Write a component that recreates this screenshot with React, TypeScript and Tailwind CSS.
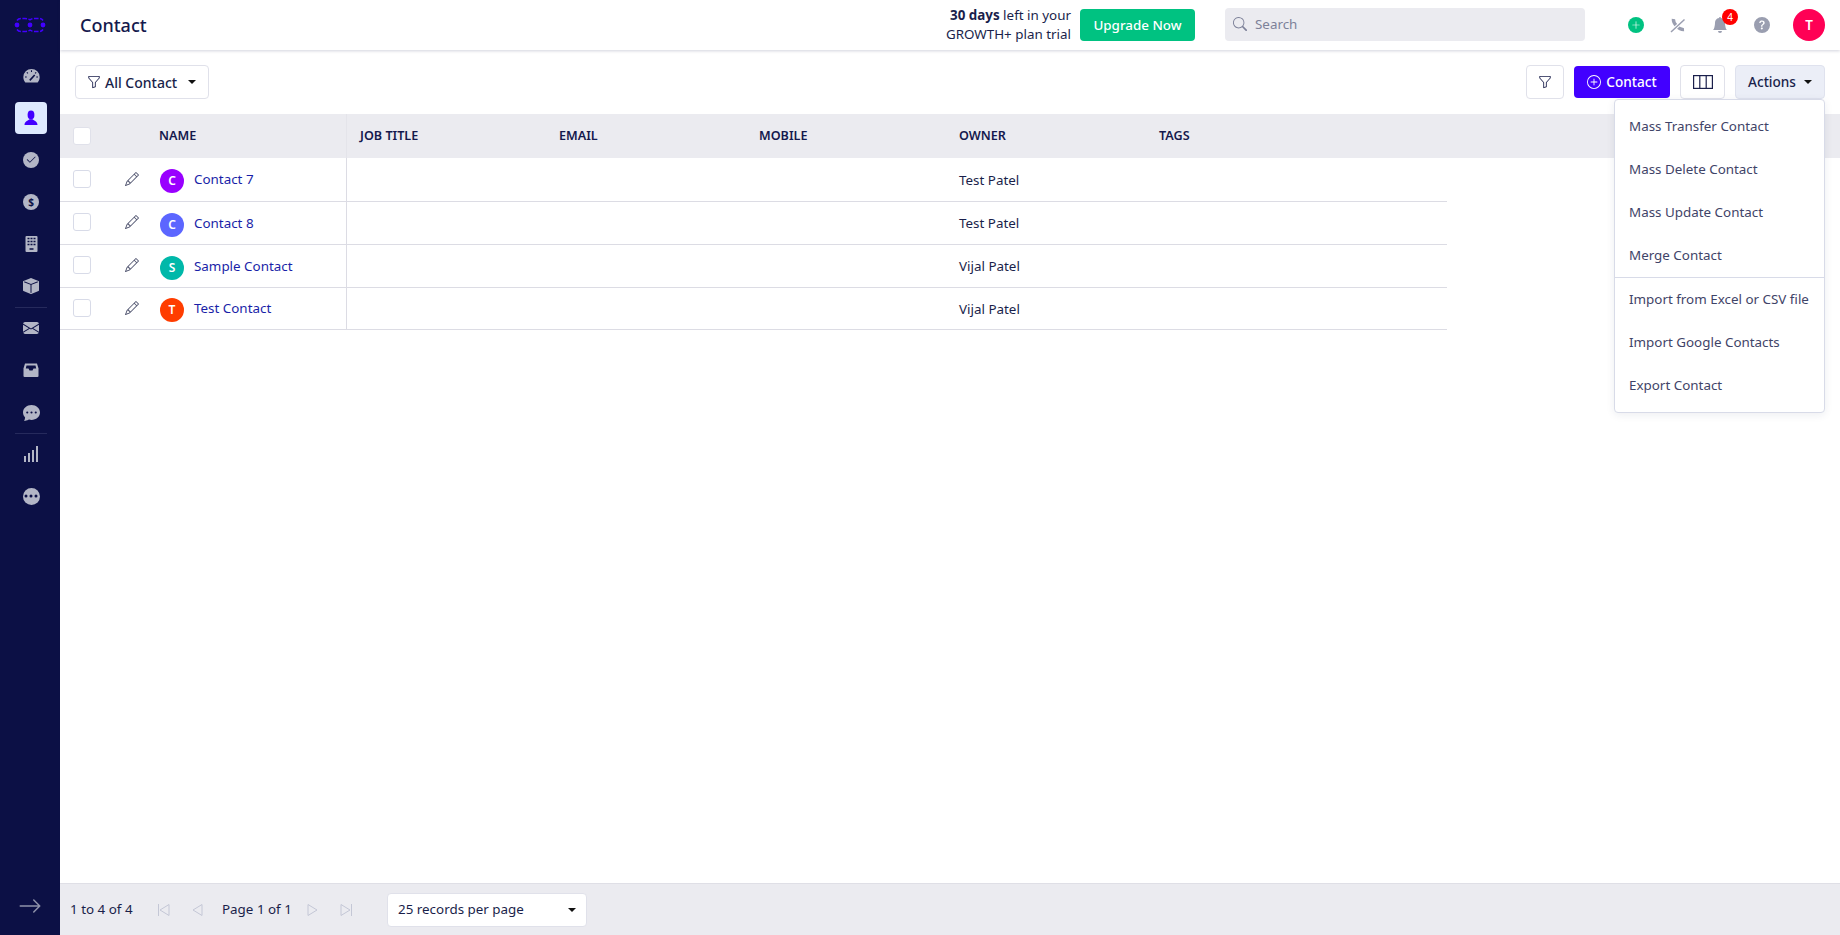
import React from 'react';
import {
  BsCheck2, BsBoxFill, BsEnvelopeFill, BsChatDotsFill, BsBellFill, BsQuestionCircleFill, BsSearch,
  BsFunnel, BsPencil, BsPlusCircle, BsArrowRight, BsPlusLg, BsThreeDots,
} from 'react-icons/bs';

const rows = [
  { name: 'Contact 7', letter: 'C', color: 'bg-[#9900ff]', owner: 'Test Patel', height: 'h-[44px]' },
  { name: 'Contact 8', letter: 'C', color: 'bg-[#5c66ff]', owner: 'Test Patel', height: 'h-[43px]' },
  { name: 'Sample Contact', letter: 'S', color: 'bg-[#00b8a9]', owner: 'Vijal Patel', height: 'h-[43px]' },
  { name: 'Test Contact', letter: 'T', color: 'bg-[#ff3d00]', owner: 'Vijal Patel', height: 'h-[42px]' },
];

const menuTop = ['Mass Transfer Contact', 'Mass Delete Contact', 'Mass Update Contact', 'Merge Contact'];
const menuBottom = ['Import from Excel or CSV file', 'Import Google Contacts', 'Export Contact'];
const columns = ['JOB TITLE', 'EMAIL', 'MOBILE', 'OWNER', 'TAGS'];

const GRAY = '#b3b6c6';
const NAVY = '#0c1045';

function Logo() {
  return (
    <svg width="32" height="16" viewBox="0 0 32 16" fill="none">
      <circle cx="3" cy="8" r="2.4" fill="#4200ff" />
      <circle cx="16" cy="8" r="2.4" fill="#4200ff" />
      <circle cx="29" cy="8" r="2.4" fill="#4200ff" />
      <path d="M3 3.500C4 2 5.500 1.500 7 1.500H11C13 1.500 14.500 2 16 2.800C17.500 2 19 1.500 21 1.500H25C26.500 1.500 28 2 29 3.500" stroke="#4200ff" strokeWidth="1.500" strokeDasharray="4.500 1.500" />
      <path d="M3 12.500C4 14 5.500 14.500 7 14.500H11C13 14.500 14.500 14 16 13.200C17.500 14 19 14.500 21 14.500H25C26.500 14.500 28 14 29 12.500" stroke="#4200ff" strokeWidth="1.500" strokeDasharray="4.500 1.500" />
    </svg>
  );
}

function Gauge() {
  return (
    <svg width="17" height="16" viewBox="0 0 16 15">
      <path d="M8 .8A7.700 7.700 0 0 0 .3 8.500c0 2 .7 3.800 1.900 5.200h11.600c1.200-1.400 1.900-3.200 1.900-5.200A7.700 7.700 0 0 0 8 .8Z" fill={GRAY} />
      <path d="M8 2.200v1.600M3.600 4l1 1.100M12.400 4l-1 1.100M1.900 8.500h1.600M12.500 8.500h1.600" stroke={NAVY} strokeWidth="1" />
      <path d="M6.400 11.600 11 6.600" stroke={NAVY} strokeWidth="1.500" />
    </svg>
  );
}

function Person() {
  return (
    <svg width="16" height="16" viewBox="0 0 16 16" fill="#4200ff">
      <ellipse cx="8" cy="5" rx="3.400" ry="4.400" />
      <path d="M1.500 15C1.500 11 5 10.800 6.500 9.200h3c1.500 1.600 5 1.800 5 5.800Z" />
    </svg>
  );
}

function Building() {
  return (
    <svg width="13" height="16" viewBox="0 0 13 16">
      <rect x="0.5" y="0" width="12" height="16" rx="1" fill={GRAY} />
      <path d="M2.500 2.500h2M5.500 2.500h2M8.500 2.500h2M2.500 5.500h2M5.500 5.500h2M8.500 5.500h2M2.500 8.500h2M5.500 8.500h2M8.500 8.500h2M4.500 13h4" stroke={NAVY} strokeWidth="1.600" />
    </svg>
  );
}

function Inbox() {
  return (
    <svg width="16" height="14" viewBox="0 0 16 14">
      <path d="M2 .5h12l1.500 5V13a1 1 0 0 1-1 1h-13a1 1 0 0 1-1-1V5.500Z" fill={GRAY} />
      <path d="M3.500 2.500h9l.7 3H10.500L9.500 7.500h-3l-1-2H2.800Z" fill={NAVY} />
    </svg>
  );
}

function Bars() {
  return (
    <svg width="14" height="16" viewBox="0 0 14 16" fill={GRAY}>
      <rect x="0" y="10" width="2" height="6" />
      <rect x="4" y="7" width="2" height="9" />
      <rect x="8" y="4" width="2" height="12" />
      <rect x="12" y="0" width="2" height="16" />
    </svg>
  );
}

function Caret() {
  return <span className="inline-block w-0 h-0 border-x-[4px] border-x-transparent border-t-[4px] border-t-[#111]" />;
}

function CircleIcon({ children }: { children: React.ReactNode }) {
  return <span className="w-4 h-4 rounded-full bg-[#b3b6c6] flex items-center justify-center text-[#0c1045]">{children}</span>;
}

function NavItem({ active, children }: { active?: boolean; children: React.ReactNode }) {
  return (
    <div className={`h-8 w-8 mt-[10px] rounded flex items-center justify-center ${active ? 'bg-[#deeaff]' : ''}`}>
      {children}
    </div>
  );
}

function NavDivider() {
  return <div className="w-8 h-px bg-[#262a5c] mt-[5px] -mb-[6px]" />;
}

function ColumnsIcon() {
  return (
    <svg width="20" height="14" viewBox="0 0 20 14" fill="none" stroke="#1a1f4b" strokeWidth="1.200">
      <rect x="0.6" y="0.6" width="18.800" height="12.800" />
      <path d="M6.800 0.6V13.400M13.200 0.6V13.400" />
    </svg>
  );
}

function PhoneSlash() {
  return (
    <svg width="16" height="16" viewBox="0 0 16 16" fill="none">
      <path d="M3.400 2C3 6.500 9 13 14 12.600" stroke="#9a9eb0" strokeWidth="3.400" />
      <path d="M0.500 15.500 15 2" stroke="#fff" strokeWidth="3.500" />
      <path d="M1 15 14.500 2.500" stroke="#9a9eb0" strokeWidth="1.500" />
    </svg>
  );
}

function SkipIcon({ dir }: { dir: 'first' | 'prev' | 'next' | 'last' }) {
  const path = {
    first: 'M1.500 1V13M12 1.500V12.500L3 7Z',
    prev: 'M12 1.500V12.500L3 7Z',
    next: 'M2 1.500V12.500L11 7Z',
    last: 'M12.500 1V13M2 1.500V12.500L11 7Z',
  }[dir];
  return (
    <svg width="14" height="14" viewBox="0 0 14 14" fill="none" stroke="#c4c7d6" strokeWidth="1">
      <path d={path} />
    </svg>
  );
}

export default function App() {
  return (
    <div className="h-[935px] w-[1840px] flex overflow-hidden bg-white text-[#1a1f4b] text-[13.4px] font-['Noto_Sans',sans-serif]">
      {/* Sidebar */}
      <aside className="w-[60px] shrink-0 bg-[#0c1045] flex flex-col items-center">
        <div className="h-[50px] w-full flex items-center justify-center"><Logo /></div>
        <div className="w-8 ml-[2px] flex flex-col items-center">
          <NavItem><Gauge /></NavItem>
          <NavItem active><Person /></NavItem>
          <NavItem><CircleIcon><BsCheck2 className="w-3 h-3" /></CircleIcon></NavItem>
          <NavItem><CircleIcon><span className="text-[10px] font-bold leading-none">$</span></CircleIcon></NavItem>
          <NavItem><Building /></NavItem>
          <NavItem><BsBoxFill className="w-4 h-4 text-[#b3b6c6]" /></NavItem>
          <NavDivider />
          <NavItem><BsEnvelopeFill className="w-4 h-4 text-[#b3b6c6]" /></NavItem>
          <NavItem><Inbox /></NavItem>
          <NavItem><BsChatDotsFill className="w-[17px] h-[17px] text-[#b3b6c6]" /></NavItem>
          <NavDivider />
          <NavItem><Bars /></NavItem>
          <NavItem>
            <span className="w-[17px] h-[17px] rounded-full bg-[#b3b6c6] flex items-center justify-center text-[#0c1045]"><BsThreeDots className="w-4 h-4" /></span>
          </NavItem>
        </div>
        <div className="mt-auto h-[52px] flex items-center justify-center pb-[6px]"><BsArrowRight className="w-6 h-6 text-[#8f92aa]" /></div>
      </aside>

      <div className="flex-1 min-w-0 flex flex-col">
        {/* Header */}
        <header className="h-[50px] shrink-0 flex items-center shadow-[0_1px_3px_rgba(30,35,80,0.2)] relative z-10 bg-white pl-5 pr-[15px]">
          <h1 className="text-[18px] font-medium text-[#14194d]">Contact</h1>
          <div className="ml-auto text-right leading-[19px]">
            <div><b className="font-bold">30 days</b> left in your</div>
            <div>GROWTH+ plan trial</div>
          </div>
          <button className="ml-[9px] w-[115px] h-8 rounded bg-[#00c281] text-white font-medium">Upgrade Now</button>
          <div className="ml-[30px] w-[360px] h-[33px] rounded bg-[#ebebf0] flex items-center px-2 gap-2 -mt-[2px] text-[#7d8199]">
            <BsSearch className="w-[14px] h-[14px]" />
            <span>Search</span>
          </div>
          <div className="ml-[43px] w-4 h-4 rounded-full bg-[#00c281] flex items-center justify-center"><BsPlusLg className="w-[10px] h-[10px] text-white" /></div>
          <div className="ml-[26px] flex"><PhoneSlash /></div>
          <div className="ml-[26px] relative">
            <BsBellFill className="w-4 h-4 text-[#9a9eb0]" />
            <span className="absolute -top-[8px] left-[10px] w-4 h-4 rounded-full bg-[#f00] text-white text-[10px] leading-4 text-center">4</span>
          </div>
          <BsQuestionCircleFill className="ml-[26px] w-4 h-4 text-[#9a9eb0]" />
          <div className="ml-[23px] w-8 h-8 rounded-full bg-[#ff0055] text-white font-semibold flex items-center justify-center">T</div>
        </header>

        {/* Toolbar */}
        <div className="h-[64px] shrink-0 flex items-center pl-[15px] pr-[15px] relative">
          <button className="h-[34px] w-[134px] border border-[#e0e1ea] rounded flex items-center pl-[11px] gap-1 text-[14px] font-medium text-[#1a1f4b]">
            <BsFunnel className="w-[14px] h-[14px]" />
            <span>All Contact</span>
            <span className="ml-auto mr-[12px] flex"><Caret /></span>
          </button>
          <button className="ml-auto h-[34px] w-[38px] border border-[#e0e1ea] rounded flex items-center justify-center"><BsFunnel className="w-[14px] h-[14px]" /></button>
          <button className="ml-[10px] h-8 w-24 rounded bg-[#4200ff] text-white text-[13.6px] font-medium flex items-center justify-center gap-[5px]">
            <BsPlusCircle className="w-[14px] h-[14px]" />
            Contact
          </button>
          <button className="ml-[10px] h-[34px] w-[45px] border border-[#e0e1ea] rounded flex items-center justify-center"><ColumnsIcon /></button>
          <button className="ml-[10px] h-[34px] w-[90px] border border-[#dfe2ee] rounded bg-[#ebeef7] flex items-center justify-center gap-2 text-[13.6px] font-medium">
            Actions <Caret />
          </button>

          {/* Actions dropdown */}
          <div className="absolute z-20 top-[49px] right-[15px] w-[211px] h-[314px] bg-white border border-[#d8dbe8] rounded shadow-[0_2px_8px_rgba(30,35,80,0.08)] text-[#3f4468] flex flex-col pt-[5px]">
            {menuTop.map(m => <div key={m} className="h-[43px] shrink-0 flex items-center pl-[14px]">{m}</div>)}
            <div className="h-px shrink-0 bg-[#d8dbe8]" />
            {menuBottom.map(m => <div key={m} className="h-[43px] shrink-0 flex items-center pl-[14px]">{m}</div>)}
          </div>
        </div>

        {/* Table */}
        <div className="flex-1 min-h-0">
          <div className="h-[44px] bg-[#ebebf0] grid grid-cols-[100px_187px_199px_200px_200px_200px_200px] items-center text-[12.6px] font-semibold text-[#14194d]">
            <div className="pl-[13px]"><span className="block w-[18px] h-[18px] bg-white rounded-[3px] border border-[#e0e1ea]" /></div>
            <div className="-ml-[1px] h-full flex items-center border-r border-[#e4e4ea]">NAME</div>
            {columns.map(c => <div key={c} className="pl-[13px]">{c}</div>)}
          </div>
          {rows.map(r => (
            <div key={r.name} className={`w-[1387px] ${r.height} border-b border-[#dcdce4] grid grid-cols-[100px_187px_199px_200px_200px_200px_1fr] items-center`}>
              <div className="flex items-center pl-[13px] -mt-[2px]">
                <span className="block w-[18px] h-[18px] rounded-[3px] border border-[#d8dbe8]" />
                <BsPencil className="ml-[34px] w-[14px] h-[14px] text-[#4a4e6a]" />
              </div>
              <div className="h-full flex items-center gap-[10px] border-r border-[#dcdce4]">
                <span className={`w-6 h-6 mt-[3px] rounded-full ${r.color} text-white text-[12px] font-semibold flex items-center justify-center`}>{r.letter}</span>
                <span className="text-[#1a1fa8]">{r.name}</span>
              </div>
              <div /><div /><div />
              <div className="pl-[13px] mt-[1px]">{r.owner}</div>
              <div />
            </div>
          ))}
        </div>

        {/* Footer */}
        <footer className="h-[52px] shrink-0 bg-[#ebebf0] border-t border-[#dfdfe6] flex items-center pl-[10px]">
          <span className="w-[63px] whitespace-nowrap">1 to 4 of 4</span>
          <span className="ml-[24px] flex"><SkipIcon dir="first" /></span>
          <span className="ml-[19px] flex"><SkipIcon dir="prev" /></span>
          <span className="ml-[18px] w-[70px] whitespace-nowrap">Page 1 of 1</span>
          <span className="ml-[14px] flex"><SkipIcon dir="next" /></span>
          <span className="ml-[19px] flex"><SkipIcon dir="last" /></span>
          <div className="ml-[34px] w-[200px] h-[34px] bg-white rounded border border-[#e0e1ea] flex items-center pl-[10px] pr-[10px] justify-between">
            <span>25 records per page</span>
            <Caret />
          </div>
        </footer>
      </div>
    </div>
  );
}
